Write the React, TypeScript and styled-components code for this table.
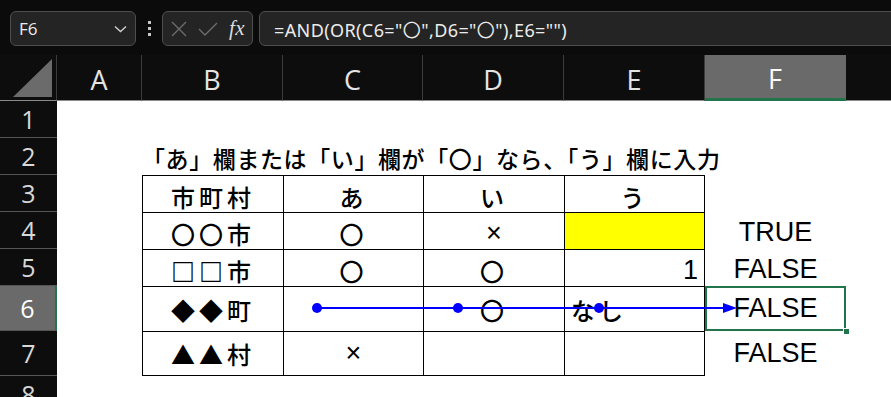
import React from 'react';
import styled, {createGlobalStyle, css} from 'styled-components';

const GlobalStyle = createGlobalStyle`
    html, body {
        margin: 0;
        padding: 0;
        background: #0b0b0b;
        overflow: hidden;
    }
`;

const Page = styled.div`
    display: flex;
    flex-direction: column;
    width: 891px;
    height: 397px;
    overflow: hidden;
    background: #0b0b0b;
`;

// ---- formula bar ----

const TopBar = styled.div`
    display: flex;
    align-items: flex-start;
    height: 55px;
    padding: 11px 0 0 10px;
    box-sizing: border-box;
    flex-shrink: 0;
`;

const boxStyle = css`
    height: 35px;
    box-sizing: border-box;
    background: #242424;
    border: 1px solid #4e4e4e;
    border-radius: 6px;
    display: flex;
    align-items: center;
`;

const NameBox = styled.div`
    ${boxStyle}
    width: 126px;
    padding: 0 8px 0 8px;
    justify-content: space-between;
    color: #ececec;
    font: 17px 'Open Sans', sans-serif;
`;

const Grip = styled.div`
    width: 26px;
    height: 35px;
    display: flex;
    flex-direction: column;
    align-items: center;
    justify-content: center;
    gap: 3px;

    & > span {
        width: 3px;
        height: 3px;
        background: #c8c8c8;
    }
`;

const FxBox = styled.div`
    ${boxStyle}
    width: 91px;
    padding-left: 7px;
    gap: 10px;
`;

const FxLabel = styled.span`
    font: italic 21px 'Liberation Serif', serif;
    color: #dcdcdc;
    margin-left: 1px;
    letter-spacing: 0.5px;
`;

const FormulaBox = styled.div`
    ${boxStyle}
    flex: 1;
    margin-left: 6px;
    margin-right: -12px;
    padding-left: 14px;
    color: #ececec;
    font: 18px 'Noto Sans', 'Noto Sans CJK JP', sans-serif;
    letter-spacing: 0.4px;
    white-space: nowrap;
`;

// ---- sheet ----

const Sheet = styled.div`
    position: relative;
    flex: 1;
    display: grid;
    grid-template-columns: 57px 85px 141px 140px 141px 141px 141px 141px;
    grid-template-rows: 46px 37px 37px 37px 37px 37px 45px 45px 37px;
    overflow: hidden;
`;

const Corner = styled.div`
    background: #0d0d0d;
    border-right: 1px solid #3c3c3c;
    border-bottom: 1px solid #8a8a8a;
    display: flex;
    justify-content: flex-end;
    align-items: flex-end;
    padding: 0 4px 3px 0;
    box-sizing: border-box;
`;

const CornerTriangle = styled.div`
    width: 39px;
    height: 38px;
    background: #6b6b6b;
    clip-path: polygon(100% 0, 100% 100%, 0 100%);
`;

const ColHeader = styled.div<{$active?: boolean}>`
    display: flex;
    align-items: center;
    justify-content: center;
    box-sizing: border-box;
    padding-top: 4px;
    background: ${(p) => (p.$active ? '#6a6a6a' : '#0d0d0d')};
    border-right: 1px solid ${(p) => (p.$active ? '#6a6a6a' : '#3c3c3c')};
    border-bottom: ${(p) => (p.$active ? '3px solid #22744a' : '1px solid #8a8a8a')};
    color: ${(p) => (p.$active ? '#ffffff' : '#e4e4e4')};
    font: 27px 'Open Sans', sans-serif;
`;

const RowHeader = styled.div<{$active?: boolean}>`
    display: flex;
    align-items: center;
    justify-content: center;
    box-sizing: border-box;
    background: ${(p) => (p.$active ? '#6a6a6a' : '#0d0d0d')};
    border-bottom: 1px solid #555555;
    border-right: ${(p) => (p.$active ? '2px solid #22744a' : 'none')};
    color: ${(p) => (p.$active ? '#ffffff' : '#d8d8d8')};
    font: 25px 'Open Sans', sans-serif;
`;

type Align = 'left' | 'center' | 'right';

const Cell = styled.div<{
    $align?: Align;
    $boxed?: boolean;
    $lastCol?: boolean;
    $lastRow?: boolean;
    $fill?: string;
    $latin?: boolean;
    $selected?: boolean;
    $low?: boolean;
}>`
    position: relative;
    display: flex;
    align-items: center;
    justify-content: ${(p) => (p.$align === 'left' ? 'flex-start' : p.$align === 'right' ? 'flex-end' : 'center')};
    box-sizing: border-box;
    padding: ${(p) => (p.$low ? '4px 6px 0 6px' : '0 6px')};
    background: ${(p) => p.$fill || '#ffffff'};
    color: #000000;
    white-space: nowrap;
    font: ${(p) => (p.$latin
        ? "27px 'Liberation Sans', 'Noto Sans CJK JP', sans-serif"
        : "500 24px 'Noto Sans CJK JP', 'DejaVu Sans', sans-serif")};
    letter-spacing: ${(p) => (p.$latin ? '0' : '4px')};
    ${(p) => p.$boxed && css`
        border-left: 1px solid #000;
        border-top: 1px solid #000;
    `}
    ${(p) => p.$lastCol && css`border-right: 1px solid #000;`}
    ${(p) => p.$lastRow && css`border-bottom: 1px solid #000;`}
    ${(p) => p.$selected && css`
        z-index: 1;
        box-shadow: inset 0 0 0 2px #22744a;
        &::after {
            content: '';
            position: absolute;
            right: -3px;
            bottom: -3px;
            width: 5px;
            height: 5px;
            background: #22744a;
            border-left: 1px solid #fff;
            border-top: 1px solid #fff;
        }
    `}
`;

// heavier strokes for the outlined square marks
const Heavy = styled.span`
    font-weight: 900;
    color: #000;
`;

const TitleCell = styled.div`
    grid-column: 3 / 9;
    display: flex;
    align-items: flex-end;
    padding: 0 0 1px 0;
    background: #ffffff;
    color: #000;
    font: 500 23px 'Noto Sans CJK JP', sans-serif;
    letter-spacing: 0.6px;
    white-space: nowrap;
    line-height: 1.3;
`;

const TraceLayer = styled.svg`
    position: absolute;
    left: 0;
    top: 0;
    z-index: 2;
    pointer-events: none;
`;

const XIcon = () => (
    <svg width="18" height="18" viewBox="0 0 18 18">
        <path d="M2 2 L16 16 M16 2 L2 16" stroke="#6c6c6c" strokeWidth="1.4" fill="none" />
    </svg>
);

const CheckIcon = () => (
    <svg width="20" height="18" viewBox="0 0 20 18">
        <path d="M1 9 L7 15 L19 3" stroke="#6c6c6c" strokeWidth="1.4" fill="none" />
    </svg>
);

const Chevron = () => (
    <svg width="13" height="8" viewBox="0 0 13 8">
        <path d="M1 1.5 L6.5 6.5 L12 1.5" stroke="#d0d0d0" strokeWidth="1.4" fill="none" />
    </svg>
);

type CellData = {text?: React.ReactNode; align?: Align; latin?: boolean; fill?: string};

// the last column (G) runs past the right edge of the window
const COLS = ['A', 'B', 'C', 'D', 'E', 'F', 'G'];
const ROWS = [1, 2, 3, 4, 5, 6, 7, 8];

// table contents: row -> column letter -> cell
const table: Record<number, Record<string, CellData>> = {
    3: {B: {text: '市町村'}, C: {text: 'あ'}, D: {text: 'い'}, E: {text: 'う'}},
    4: {B: {text: '〇〇市'}, C: {text: '〇'}, D: {text: '×', latin: true}, E: {fill: '#ffff00'}, F: {text: 'TRUE', latin: true}},
    5: {B: {text: <><Heavy>□□</Heavy>市</>}, C: {text: '〇'}, D: {text: '〇'}, E: {text: '1', align: 'right', latin: true}, F: {text: 'FALSE', latin: true}},
    6: {B: {text: '◆◆町'}, D: {text: '〇'}, E: {text: 'なし', align: 'left'}, F: {text: 'FALSE', latin: true}},
    7: {B: {text: '▲▲村'}, C: {text: '×', latin: true}, F: {text: 'FALSE', latin: true}},
};

const boxedCols = ['B', 'C', 'D', 'E'];

export default function App() {
    return (
        <Page>
            <GlobalStyle />
            <TopBar>
                <NameBox>
                    <span>F6</span>
                    <Chevron />
                </NameBox>
                <Grip>
                    <span />
                    <span />
                    <span />
                </Grip>
                <FxBox>
                    <XIcon />
                    <CheckIcon />
                    <FxLabel>fx</FxLabel>
                </FxBox>
                <FormulaBox>=AND(OR(C6="〇",D6="〇"),E6="")</FormulaBox>
            </TopBar>

            <Sheet>
                <Corner>
                    <CornerTriangle />
                </Corner>
                {COLS.map((c) => (
                    <ColHeader key={c} $active={c === 'F'}>{c}</ColHeader>
                ))}

                {ROWS.map((r) => (
                    <React.Fragment key={r}>
                        <RowHeader $active={r === 6}>{r}</RowHeader>
                        {r === 2 ? (
                            <>
                                <Cell />
                                <TitleCell>「あ」欄または「い」欄が「〇」なら、「う」欄に入力</TitleCell>
                            </>
                        ) : (
                            COLS.map((c) => {
                                const d = table[r]?.[c] || {};
                                const boxed = r >= 3 && r <= 7 && boxedCols.includes(c);
                                return (
                                    <Cell
                                        key={c}
                                        $align={d.align}
                                        $latin={d.latin}
                                        $fill={d.fill}
                                        $boxed={boxed}
                                        $lastCol={boxed && c === 'E'}
                                        $lastRow={boxed && r === 7}
                                        $selected={r === 6 && c === 'F'}
                                        $low={r >= 3 && r <= 5}
                                    >
                                        {d.text}
                                    </Cell>
                                );
                            })
                        )}
                    </React.Fragment>
                ))}

                <TraceLayer width="891" height="342">
                    <line x1="317" y1="253" x2="726" y2="253" stroke="#0000ff" strokeWidth="2" />
                    <polygon points="723,248 737,253 723,258" fill="#0000ff" />
                    <circle cx="317" cy="253" r="5" fill="#0000ff" />
                    <circle cx="458" cy="253" r="5" fill="#0000ff" />
                    <circle cx="599" cy="253" r="5" fill="#0000ff" />
                </TraceLayer>
            </Sheet>
        </Page>
    );
}
